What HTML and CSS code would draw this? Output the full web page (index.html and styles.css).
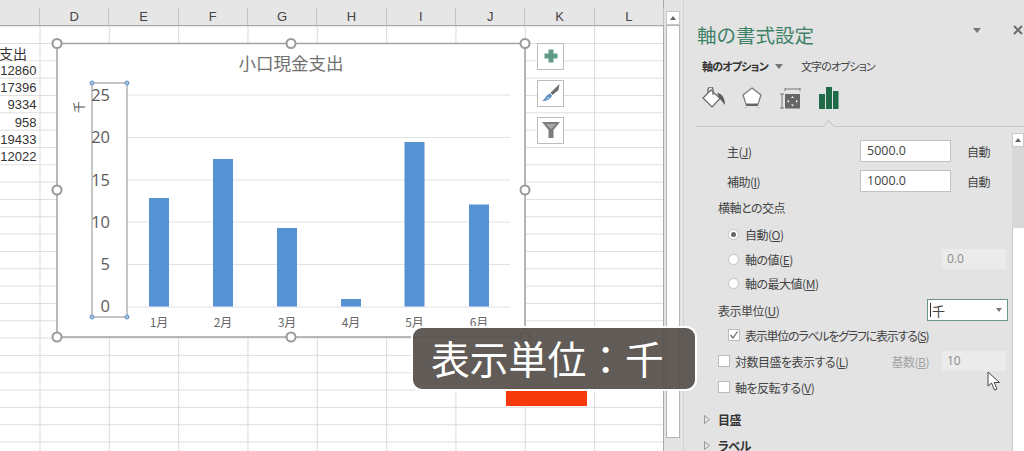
FILE: index.html
```html
<!DOCTYPE html>
<html lang="ja">
<head>
    <meta charset="UTF-8">
    <title>軸の書式設定</title>
    <link rel="stylesheet" href="styles.css">
</head>
<body>
<div class="app">

    <!-- シート -->
    <div class="sheet">
        <div class="col-head">
            <div class="col-corner"></div>
            <div class="col">D</div><div class="col">E</div><div class="col">F</div>
            <div class="col">G</div><div class="col">H</div><div class="col">I</div>
            <div class="col">J</div><div class="col">K</div><div class="col">L</div>
        </div>
        <div class="grid">
            <div class="cell cell-head">支出</div>
            <div class="cell">12860</div>
            <div class="cell">17396</div>
            <div class="cell">9334</div>
            <div class="cell">958</div>
            <div class="cell">19433</div>
            <div class="cell">12022</div>
        </div>

        <!-- グラフ -->
        <svg class="chart" viewBox="0 0 664 451" width="664" height="451">
            <rect x="57" y="43.5" width="468" height="293.5" fill="#fff" stroke="#a3a3a3" stroke-width="1.5"/>
            <text class="chart-title" x="291" y="70" text-anchor="middle">小口現金支出</text>
            <g stroke="#e2e2e2" stroke-width="1">
                <line x1="127" y1="95" x2="510" y2="95"/>
                <line x1="127" y1="137.5" x2="510" y2="137.5"/>
                <line x1="127" y1="180" x2="510" y2="180"/>
                <line x1="127" y1="222" x2="510" y2="222"/>
                <line x1="127" y1="264.5" x2="510" y2="264.5"/>
                <line x1="127" y1="307" x2="510" y2="307"/>
            </g>
            <g fill="#5592d4">
                <rect x="149" y="198" width="20" height="108.5"/>
                <rect x="213" y="159" width="20" height="147.5"/>
                <rect x="277" y="228" width="20" height="78.5"/>
                <rect x="341" y="299" width="20" height="7.5"/>
                <rect x="404.5" y="142" width="20" height="164.5"/>
                <rect x="469" y="204.5" width="20" height="102"/>
            </g>
            <rect x="92" y="83" width="35" height="234" fill="none" stroke="#a8a8a8" stroke-width="1.3"/>
            <g class="tick" text-anchor="end">
                <text x="110" y="101">25</text>
                <text x="110" y="143">20</text>
                <text x="110" y="186">15</text>
                <text x="110" y="228">10</text>
                <text x="110" y="270">5</text>
                <text x="110" y="312">0</text>
            </g>
            <text class="unit" transform="translate(84 107) rotate(-90)" text-anchor="middle">千</text>
            <g class="month" text-anchor="middle">
                <text x="159" y="327">1月</text>
                <text x="223" y="327">2月</text>
                <text x="287" y="327">3月</text>
                <text x="351" y="327">4月</text>
                <text x="414.5" y="327">5月</text>
                <text x="479" y="327">6月</text>
            </g>
            <g fill="#a9c6e4" stroke="#5f92c4" stroke-width="1">
                <circle cx="92" cy="83" r="2"/>
                <circle cx="127" cy="83" r="2"/>
                <circle cx="92" cy="317" r="2"/>
                <circle cx="127" cy="317" r="2"/>
            </g>
            <g fill="#fff" stroke="#999" stroke-width="2">
                <circle cx="57" cy="43.5" r="4.5"/>
                <circle cx="291" cy="43.5" r="4.5"/>
                <circle cx="525" cy="43.5" r="4.5"/>
                <circle cx="57" cy="190" r="4.5"/>
                <circle cx="525" cy="190" r="4.5"/>
                <circle cx="57" cy="337" r="4.5"/>
                <circle cx="291" cy="337" r="4.5"/>
                <circle cx="525" cy="337" r="4.5"/>
            </g>
        </svg>

        <div class="chart-tools">
            <div class="tool">
                <svg width="16" height="16" viewBox="0 0 16 16"><path d="M5.5 1.5h5v4h4v5h-4v4h-5v-4h-4v-5h4z" fill="#5e9c86"/></svg>
            </div>
            <div class="tool">
                <svg width="20" height="20" viewBox="0 0 20 20">
                    <path d="M18.5 1 L17.5 7 L11.5 12 L9.5 9.8 Z" fill="#6e6e6e"/>
                    <path d="M9 10.5 L11 12.5 C10 16 6 18 1 18 C4 16.5 4.5 12.5 9 10.5 Z" fill="#5b8fc4"/>
                    <path d="M5 15.5 L8 14 L8.5 15.5 Z" fill="#d5e3f2"/>
                </svg>
            </div>
            <div class="tool">
                <svg width="20" height="18" viewBox="0 0 20 18"><path d="M1 1 H19 L12.5 9 V17 H7.5 V9 Z" fill="#7c7c7c"/><path d="M5 3 H15 L11 7.5 H9 Z" fill="#a6a6a6"/></svg>
            </div>
        </div>
    </div>

    <!-- シートのスクロールバー -->
    <div class="sheet-scroll">
        <div class="scroll-btn"><span class="caret-up"></span></div>
        <div class="sheet-thumb"></div>
    </div>

    <!-- 書式設定パネル -->
    <div class="panel">
        <div class="panel-head">
            <div class="panel-title">軸の書式設定</div>
            <span class="caret panel-menu"></span>
            <svg class="panel-close" width="10" height="10" viewBox="0 0 10 10"><path d="M1 1 L9 9 M9 1 L1 9" stroke="#6e6e6e" stroke-width="2"/></svg>
        </div>
        <div class="tabs">
            <span class="tab-on">軸のオプション</span>
            <span class="caret tab-caret"></span>
            <span class="tab-off">文字のオプション</span>
        </div>
        <div class="icon-row">
            <svg width="24" height="22" viewBox="0 0 24 22">
                <path d="M1 11 L9 3 L18 11.5 L10 20 Z" fill="#fff" stroke="#666" stroke-width="1.2"/>
                <path d="M6 6 V2.5 A2.5 2.5 0 0 1 11 2.5 V8" fill="none" stroke="#666" stroke-width="1.2"/>
                <path d="M15 6 C19 6 23 10 23 18 C21 16 20 14 18 12 Z" fill="#5c5c5c"/>
            </svg>
            <svg width="24" height="22" viewBox="0 0 24 22">
                <path d="M11 1 L20 8 L17 17 H5 L2 8 Z" fill="#fff" stroke="#777" stroke-width="1.2"/>
                <path d="M5 18 H17" stroke="#666" stroke-width="2"/>
                <path d="M4 20 L5 21 M18 20 L17 21" stroke="#bbb" stroke-width="1.5"/>
            </svg>
            <svg width="24" height="22" viewBox="0 0 24 22">
                <path d="M5 1 V4 M20 1 V4 M5 2 H20" stroke="#777" stroke-width="1" fill="none"/>
                <path d="M0 7 H4 M0 21 H4 M2 7 V21" stroke="#777" stroke-width="1" fill="none"/>
                <rect x="5" y="7" width="15" height="14.5" fill="#666"/>
                <path d="M12.5 9 L14 11 H11 Z M12.5 19.5 L14 17.5 H11 Z M7 14.2 L9 12.7 V15.7 Z M18 14.2 L16 12.7 V15.7 Z" fill="#eee"/>
            </svg>
            <svg width="24" height="22" viewBox="0 0 24 22">
                <path d="M0 7 H6 V22 H0 Z M7 0 H13 V22 H7 Z M14 4 H19.5 V22 H14 Z" fill="#1f6a48"/>
            </svg>
        </div>
        <div class="divider"></div>

        <div class="panel-body">
            <div class="form">
                <div class="row">
                    <span class="lbl-unit">主(<u>J</u>)</span>
                    <span class="field">5000.0</span>
                    <span class="auto">自動</span>
                </div>
                <div class="row">
                    <span class="lbl-unit">補助(<u>I</u>)</span>
                    <span class="field">1000.0</span>
                    <span class="auto">自動</span>
                </div>
                <div class="row row-sub">横軸との交点</div>
                <div class="row row-opt">
                    <span class="radio radio-on"></span>
                    <span>自動(<u>O</u>)</span>
                </div>
                <div class="row row-opt">
                    <span class="radio"></span>
                    <span>軸の値(<u>E</u>)</span>
                    <span class="field-off field-end">0.0</span>
                </div>
                <div class="row row-opt">
                    <span class="radio"></span>
                    <span>軸の最大値(<u>M</u>)</span>
                </div>
                <div class="row row-sub">
                    <span>表示単位(<u>U</u>)</span>
                    <span class="select"><span class="text-cursor"></span>千<span class="caret select-caret"></span></span>
                </div>
                <div class="row row-opt">
                    <span class="check check-on">
                        <svg width="10" height="10" viewBox="0 0 10 10"><path d="M1.5 5 L4 8 L8.5 1.5" fill="none" stroke="#666" stroke-width="1.2"/></svg>
                    </span>
                    <span class="tight">表示単位のラベルをグラフに表示する(<u>S</u>)</span>
                </div>
                <div class="row row-sub">
                    <span class="check"></span>
                    <span>対数目盛を表示する(<u>L</u>)</span>
                    <span class="base-lbl">基数(<u>B</u>)</span>
                    <span class="field-off">10</span>
                </div>
                <div class="row row-sub">
                    <span class="check"></span>
                    <span>軸を反転する(<u>V</u>)</span>
                </div>
                <div class="row row-section">
                    <svg width="6" height="9" viewBox="0 0 6 9"><path d="M.5 .5 L5.5 4.5 L.5 8.5 Z" fill="none" stroke="#999"/></svg>
                    <b>目盛</b>
                </div>
                <div class="row row-section">
                    <svg width="6" height="9" viewBox="0 0 6 9"><path d="M.5 .5 L5.5 4.5 L.5 8.5 Z" fill="none" stroke="#999"/></svg>
                    <b>ラベル</b>
                </div>
            </div>
            <div class="panel-scroll">
                <div class="scroll-btn"><span class="caret-up"></span></div>
                <div class="panel-track"></div>
                <div class="panel-thumb"></div>
            </div>
        </div>
    </div>

    <!-- 字幕 -->
    <div class="red-bar"></div>
    <div class="caption">表示単位：千</div>
    <svg class="pointer" width="14" height="20" viewBox="0 0 14 20">
        <path d="M1 1 V15 L4.5 12 L7.5 19 L10 18 L7.2 11.5 L12.5 11.5 Z" fill="#fff" stroke="#444" stroke-width="1"/>
    </svg>
</div>
</body>
</html>
```

FILE: styles.css
```css
body {
    margin: 0;
    font-family: "Noto Sans CJK JP", sans-serif;
    font-feature-settings: "palt";
}
.app {
    position: relative;
    display: flex;
    width: 1024px;
    height: 451px;
    overflow: hidden;
    background-color: #e3e3e3;
}

/* シート */
.sheet {
    position: relative;
    display: flex;
    flex-direction: column;
    width: 664px;
    flex-shrink: 0;
    background-color: #fff;
    border-right: 1px solid #aaa;
    box-sizing: border-box;
}
.col-head {
    display: flex;
    align-items: flex-end;
    height: 26px;
    flex-shrink: 0;
    background-color: #e6e6e6;
    border-bottom: 1px solid #a9a9a9;
    box-sizing: border-box;
}
.col-corner {
    width: 40px;
    height: 17px;
    flex-shrink: 0;
    border-right: 1px solid #c4c4c4;
    box-sizing: border-box;
}
.col {
    width: 69.33px;
    height: 17px;
    flex-shrink: 0;
    border-right: 1px solid #c4c4c4;
    box-sizing: border-box;
    font-family: "Liberation Sans", sans-serif;
    font-size: 13px;
    line-height: 17px;
    text-align: center;
    color: #444;
}
.grid {
    flex: 1;
    padding-top: 18.5px;
    background-image:
        linear-gradient(90deg, #d9d9d9 1px, transparent 1px),
        linear-gradient(#dedede 1px, transparent 1px);
    background-size: 69.33px 100%, 100% 17.33px;
    background-position: 39.5px 0, 0 17px;
}
.cell {
    width: 36.5px;
    height: 17.33px;
    font-family: "Liberation Sans", sans-serif;
    font-size: 13px;
    line-height: 17.33px;
    text-align: right;
    color: #333;
}
.cell-head {
    width: 30px;
    margin-left: -1px;
    font-family: "Noto Sans CJK JP", sans-serif;
    font-size: 14px;
    text-align: left;
    font-feature-settings: normal;
}

/* グラフ */
.chart {
    position: absolute;
    left: 0;
    top: 0;
}
.chart-title {
    font-size: 17.5px;
    fill: #707070;
    font-feature-settings: normal;
}
.tick {
    font-family: "Open Sans", sans-serif;
    font-size: 16.5px;
    fill: #5c5c5c;
}
.unit {
    font-size: 12px;
    fill: #555;
}
.month {
    font-size: 12px;
    fill: #666;
    font-feature-settings: normal;
}
.chart-tools {
    position: absolute;
    left: 537px;
    top: 42.5px;
    display: flex;
    flex-direction: column;
    gap: 10px;
}
.tool {
    display: flex;
    align-items: center;
    justify-content: center;
    width: 27px;
    height: 27px;
    background-color: #fff;
    border: 1px solid #bdbdbd;
    box-sizing: border-box;
}

/* スクロールバー */
.sheet-scroll {
    display: flex;
    flex-direction: column;
    width: 20px;
    flex-shrink: 0;
    padding: 11px 3px 0 2px;
    box-sizing: border-box;
    background-color: #e3e3e3;
    border-right: 1px solid #d2d2d2;
}
.scroll-btn {
    display: flex;
    align-items: center;
    justify-content: center;
    height: 14px;
    flex-shrink: 0;
    background-color: #fff;
    border: 1px solid #c9c9c9;
    box-sizing: border-box;
}
.caret-up {
    width: 0;
    height: 0;
    border-left: 3.5px solid transparent;
    border-right: 3.5px solid transparent;
    border-bottom: 4px solid #666;
}
.sheet-thumb {
    height: 413px;
    background-color: #fff;
    border: 1px solid #b5b5b5;
    box-sizing: border-box;
}

/* パネル */
.panel {
    position: relative;
    flex: 1;
    min-width: 0;
    color: #444;
    font-size: 12px;
}
.panel-head {
    display: flex;
    align-items: center;
    height: 24px;
    margin-top: 23px;
    padding-left: 13px;
}
.panel-title {
    font-size: 19.5px;
    line-height: 24px;
    color: #3f8267;
    font-feature-settings: normal;
}
.caret {
    width: 0;
    height: 0;
    border-left: 4px solid transparent;
    border-right: 4px solid transparent;
    border-top: 5px solid #777;
}
.panel-menu {
    margin-left: 159px;
    margin-top: -10px;
}
.panel-close {
    margin-left: 32px;
    margin-top: -10px;
}
.tabs {
    display: flex;
    align-items: center;
    height: 20px;
    margin-top: 9px;
    padding-left: 18px;
    font-size: 11px;
}
.tab-on {
    font-weight: bold;
    color: #333;
    letter-spacing: -0.8px;
}
.tab-caret {
    margin-left: 7px;
}
.tab-off {
    margin-left: 18px;
    letter-spacing: -0.9px;
}
.icon-row {
    display: flex;
    gap: 15px;
    margin-top: 11px;
    padding-left: 18px;
}
.divider {
    position: relative;
    height: 1px;
    margin-top: 17px;
    margin-left: 12px;
    background-color: #c6c6c6;
}
.divider::after {
    content: "";
    position: absolute;
    left: 128px;
    top: -4px;
    width: 8px;
    height: 8px;
    background-color: #e3e3e3;
    border-top: 1px solid #c6c6c6;
    border-left: 1px solid #c6c6c6;
    transform: rotate(45deg);
}
.panel-body {
    display: flex;
    height: 324px;
}
.form {
    display: grid;
    grid-template-rows: 30px 26px 27px 25px 24px 27px 25px 26px 26px 32px 26px;
    width: 328px;
    flex-shrink: 0;
    padding: 12px 6px 0 0;
    box-sizing: border-box;
}
.row {
    display: flex;
    align-items: center;
    height: 24px;
    white-space: nowrap;
    letter-spacing: -0.5px;
}
.row u {
    text-underline-offset: 1px;
}
.row .tight {
    letter-spacing: -1.25px;
}
.row-sub {
    padding-left: 34px;
}
.row-opt {
    padding-left: 44px;
}
.row-section {
    padding-left: 20px;
    gap: 8px;
}
.row-section b {
    color: #333;
}
.lbl-unit {
    width: 133px;
    margin-left: 43px;
    flex-shrink: 0;
}
.field {
    width: 91px;
    height: 22px;
    padding-left: 6px;
    background-color: #fff;
    border: 1px solid #c2c2c2;
    box-sizing: border-box;
    font-family: "Open Sans", sans-serif;
    font-size: 12.5px;
    line-height: 20px;
    letter-spacing: 0;
}
.auto {
    margin-left: 16px;
}
.field-off {
    width: 64px;
    height: 20px;
    padding-left: 5px;
    background-color: #ebebeb;
    box-sizing: border-box;
    font-family: "Open Sans", sans-serif;
    font-size: 12px;
    line-height: 20px;
    color: #8a8a8a;
    letter-spacing: 0;
}
.field-end {
    margin-left: auto;
}
.radio {
    width: 11px;
    height: 11px;
    margin-right: 6px;
    border: 1px solid #c4c4c4;
    border-radius: 50%;
    background-color: #fff;
    box-sizing: border-box;
    display: flex;
    align-items: center;
    justify-content: center;
}
.radio-on::after {
    content: "";
    width: 5px;
    height: 5px;
    border-radius: 50%;
    background-color: #666;
}
.check {
    display: flex;
    align-items: center;
    justify-content: center;
    width: 12px;
    height: 12px;
    margin-right: 5px;
    flex-shrink: 0;
    background-color: #fff;
    border: 1px solid #bcbcbc;
    box-sizing: border-box;
}
.select {
    position: relative;
    display: flex;
    align-items: center;
    width: 81px;
    height: 22px;
    margin-left: auto;
    margin-right: -2px;
    padding-left: 2px;
    background-color: #fff;
    border: 1px solid #6d9585;
    box-sizing: border-box;
    font-size: 13px;
}
.text-cursor {
    width: 1px;
    height: 14px;
    margin-right: 1px;
    background-color: #333;
}
.select-caret {
    margin-left: auto;
    margin-right: 5px;
    border-left-width: 3.5px;
    border-right-width: 3.5px;
    border-top-width: 4px;
}
.base-lbl {
    margin-left: auto;
    margin-right: 13px;
    color: #a3a3a3;
}
.panel-scroll {
    display: flex;
    flex-direction: column;
    width: 12px;
    margin-top: 6px;
}
.panel-track {
    height: 81px;
    flex-shrink: 0;
    background-color: #d8d8d8;
}
.panel-thumb {
    flex: 1;
    background-color: #fff;
    border-left: 1px solid #c9c9c9;
    box-sizing: border-box;
}

/* 字幕 */
.caption {
    position: absolute;
    left: 411px;
    top: 326px;
    width: 286px;
    height: 65px;
    padding-left: 18px;
    box-sizing: border-box;
    background-color: rgba(88, 82, 78, 0.94);
    border: 2px solid #fff;
    border-radius: 11px;
    font-size: 38.8px;
    line-height: 58px;
    color: #fff;
    font-feature-settings: normal;
    white-space: nowrap;
}
.red-bar {
    position: absolute;
    left: 506px;
    top: 388px;
    width: 81px;
    height: 18px;
    background-color: #f63a0c;
}
.pointer {
    position: absolute;
    left: 987px;
    top: 371px;
}
```
